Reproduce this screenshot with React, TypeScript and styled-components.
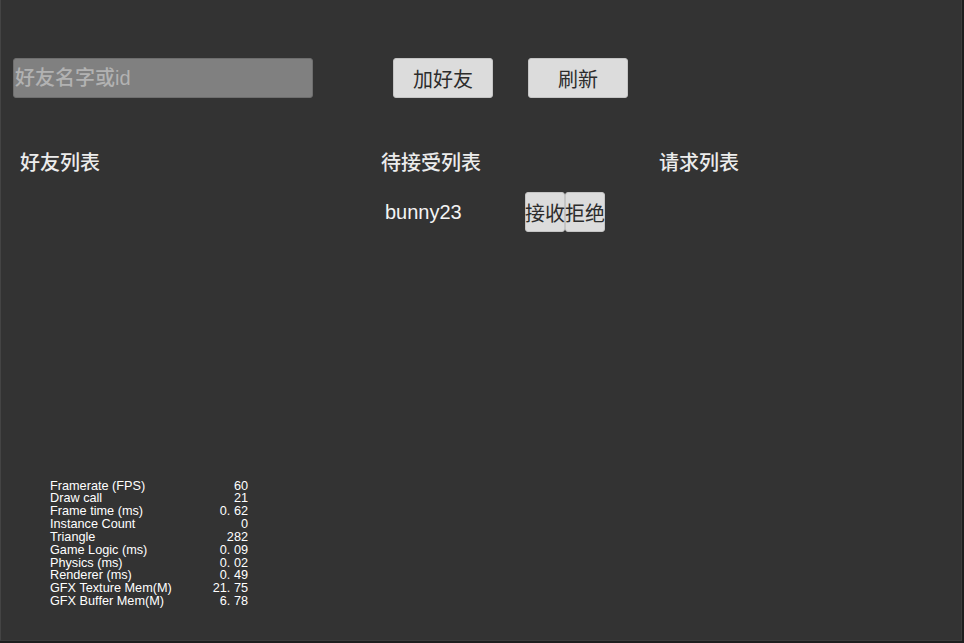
import React from "react";
import styled, { createGlobalStyle } from "styled-components";

const Global = createGlobalStyle`
  html, body { margin: 0; padding: 0; background: #1e1e1e; }
  body { font-family: "Liberation Sans", "Noto Sans CJK SC", sans-serif; }
  * { box-sizing: border-box; }
`;

const Frame = styled.div`
  width: 962px;
  height: 641px;
  background: #333333;
  border-left: 1px solid #444444;
  border-bottom: 1px solid #3c3c3c;
  border-right: 1px solid #3c3c3c;
  display: flex;
  flex-direction: column;
  overflow: hidden;
`;

const TopBar = styled.div`
  display: flex;
  align-items: center;
  padding: 58px 0 0 12px;
`;

const NameInput = styled.input`
  width: 300px;
  height: 40px;
  background: #808080;
  border: 1px solid #6e6e6e;
  border-radius: 3px;
  padding: 0 0 0 1px;
  font-family: "Liberation Sans", "Noto Sans CJK SC", sans-serif;
  font-size: 20px;
  font-weight: 500;
  color: #e0e0e0;
  outline: none;
  &::placeholder { color: #b2b2b2; }
`;

const Button = styled.button<{ $w: number; $ml: number }>`
  width: ${(p) => p.$w}px;
  height: 40px;
  margin-left: ${(p) => p.$ml}px;
  background: #dcdcdc;
  border: 1px solid #c4c4c4;
  border-radius: 3px;
  padding: 0;
  font-family: "Noto Sans CJK SC", "Liberation Sans", sans-serif;
  font-size: 20px;
  color: #2c2c2c;
  white-space: nowrap;
  display: flex;
  align-items: center;
  justify-content: center;
  overflow: visible;
  flex-shrink: 0;
`;

const Columns = styled.div`
  display: grid;
  grid-template-columns: 361px 278px 1fr;
  padding: 52px 0 0 19px;
`;

const Column = styled.div`
  display: flex;
  flex-direction: column;
`;

const Heading = styled.div`
  height: 24px;
  line-height: 24px;
  font-family: "Noto Sans CJK SC", sans-serif;
  font-size: 20px;
  font-weight: 500;
  color: #ececec;
`;

const PendingRow = styled.div`
  display: flex;
  align-items: center;
  margin-top: 18px;
  padding-left: 4px;
`;

const UserName = styled.div`
  width: 140px;
  flex-shrink: 0;
  font-family: "Liberation Sans", sans-serif;
  font-size: 20px;
  color: #f4f4f4;
`;

const Small = styled(Button)`
  width: 40px;
  margin-left: 0;
`;

const Stats = styled.div`
  margin-top: auto;
  margin-bottom: 32px;
  margin-left: 49px;
  width: 198px;
  display: grid;
  grid-template-columns: 1fr auto;
  font-family: "Liberation Sans", sans-serif;
  font-size: 12.7px;
  line-height: 12.85px;
  color: #ffffff;
`;

const StatValue = styled.span`
  text-align: right;
`;

const stats: [string, string][] = [
  ["Framerate (FPS)", "60"],
  ["Draw call", "21"],
  ["Frame time (ms)", "0. 62"],
  ["Instance Count", "0"],
  ["Triangle", "282"],
  ["Game Logic (ms)", "0. 09"],
  ["Physics (ms)", "0. 02"],
  ["Renderer (ms)", "0. 49"],
  ["GFX Texture Mem(M)", "21. 75"],
  ["GFX Buffer Mem(M)", "6. 78"],
];

export default function App() {
  return (
    <>
      <Global />
      <Frame>
        <TopBar>
          <NameInput placeholder="好友名字或id" />
          <Button $w={100} $ml={80}>加好友</Button>
          <Button $w={100} $ml={35}>刷新</Button>
        </TopBar>
        <Columns>
          <Column>
            <Heading>好友列表</Heading>
          </Column>
          <Column>
            <Heading>待接受列表</Heading>
            <PendingRow>
              <UserName>bunny23</UserName>
              <Small $w={40} $ml={0}>接收</Small>
              <Small $w={40} $ml={0}>拒绝</Small>
            </PendingRow>
          </Column>
          <Column>
            <Heading>请求列表</Heading>
          </Column>
        </Columns>
        <Stats>
          {stats.map(([k, v]) => (
            <React.Fragment key={k}>
              <span>{k}</span>
              <StatValue>{v}</StatValue>
            </React.Fragment>
          ))}
        </Stats>
      </Frame>
    </>
  );
}
